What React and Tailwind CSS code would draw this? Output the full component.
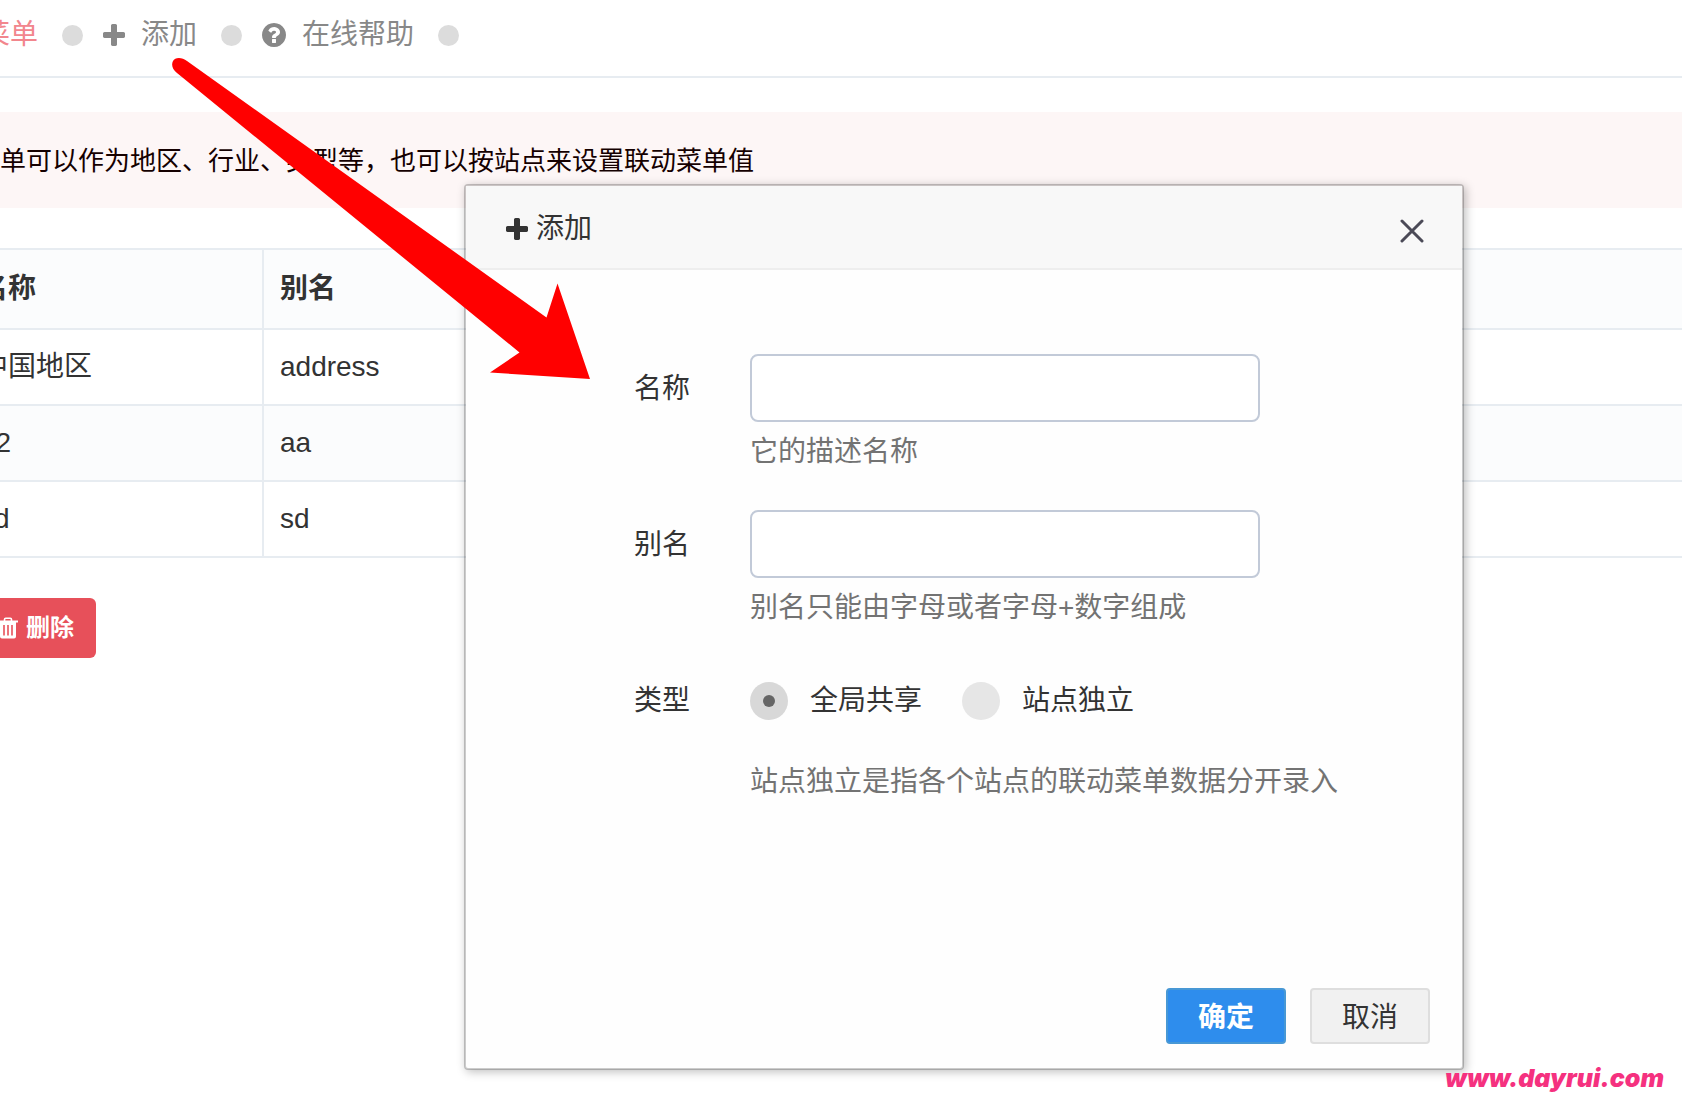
import React from 'react';

const rows = [
  { name: '中国地区', alias: 'address' },
  { name: '12', alias: 'aa' },
  { name: 'sd', alias: 'sd' },
];

function PlusIcon() {
  return (
    <svg viewBox="192 128 1408 1408" className="w-[22px] h-[22px] shrink-0" fill="currentColor" aria-hidden="true">
      <path d="M1600 736v192q0 40-28 68t-68 28h-416v416q0 40-28 68t-68 28h-192q-40 0-68-28t-28-68v-416h-416q-40 0-68-28t-28-68v-192q0-40 28-68t68-28h416v-416q0-40 28-68t68-28h192q40 0 68 28t28 68v416h416q40 0 68 28t28 68z" />
    </svg>
  );
}

function HelpIcon() {
  return (
    <svg viewBox="128 128 1536 1536" className="w-6 h-6 shrink-0" fill="currentColor" aria-hidden="true">
      <path d="M1024 1376v-192q0-14-9-23t-23-9h-192q-14 0-23 9t-9 23v192q0 14 9 23t23 9h192q14 0 23-9t9-23zm256-672q0-88-55.5-163t-138.5-116-170-41q-243 0-371 213-15 24 8 42l132 100q7 6 19 6 16 0 25-12 53-68 86-92 34-24 86-24 48 0 85.5 26t37.5 59q0 38-20 61t-68 45q-63 28-115.5 86.5t-52.5 125.5v36q0 14 9 23t23 9h192q14 0 23-9t9-23q0-19 21.5-49.5t54.5-49.5q32-18 49-28.5t46-35 44.5-48 28-60.5 12.5-81zm384 192q0 209-103 385.5t-279.5 279.5-385.5 103-385.5-103-279.5-279.5-103-385.5 103-385.5 279.5-279.5 385.5-103 385.5 103 279.5 279.5 103 385.5z" />
    </svg>
  );
}

function TrashIcon() {
  return (
    <svg viewBox="0 0 20 22" className="w-5 h-[22px] shrink-0" fill="currentColor" aria-hidden="true">
      <path d="M0 3.500h20v2H0z" />
      <path d="M6.500 4V2.500a1.200 1.200 0 0 1 1.200-1.200h4.600a1.200 1.200 0 0 1 1.200 1.200V4" fill="none" stroke="currentColor" strokeWidth="1.6" />
      <path fillRule="evenodd" d="M2 5h16v14.500a2 2 0 0 1-2 2H4a2 2 0 0 1-2-2zM5.200 8v10.500h1.600V8zM9.200 8v10.500h1.600V8zM13.200 8v10.500h1.600V8z" />
    </svg>
  );
}

function Dot() {
  return <span className="w-[21px] h-[21px] rounded-full bg-[#dcdcdc] shrink-0" />;
}

function NavBar() {
  return (
    <nav className="border-b-2 border-[#e7ecf1] overflow-hidden">
      <ul className="-ml-[18px] h-[76px] pb-1.5 flex items-center gap-5 text-[#888888] whitespace-nowrap">
        <li className="flex items-center gap-6">
          <a href="#menu" className="text-[#f2868d]">菜单</a>
          <Dot />
        </li>
        <li className="flex items-center gap-6">
          <a href="#add" className="flex items-center gap-4">
            <PlusIcon />
            添加
          </a>
          <Dot />
        </li>
        <li className="flex items-center gap-6">
          <a href="#help" className="flex items-center gap-4">
            <HelpIcon />
            在线帮助
          </a>
          <Dot />
        </li>
      </ul>
    </nav>
  );
}

function MenuTable() {
  const cell = 'border-2 border-[#e7ecf1] px-4 text-left';
  return (
    <table className="-ml-[38px] w-[calc(100%+76px)] border-collapse text-[#333333]">
      <thead>
        <tr className="h-20 bg-[#fbfcfd]">
          <th scope="col" className={cell + ' w-[300px]'}>名称</th>
          <th scope="col" className={cell}>别名</th>
        </tr>
      </thead>
      <tbody>
        {rows.map((row) => (
          <tr key={row.alias + row.name} className="h-19 even:bg-[#fbfcfd]">
            <td className={cell}>{row.name}</td>
            <td className={cell}>{row.alias}</td>
          </tr>
        ))}
      </tbody>
    </table>
  );
}

function Field({ id, label, help }) {
  return (
    <div className="flex gap-[60px]">
      <label htmlFor={id} className="w-[224px] h-[68px] pt-0.5 shrink-0 flex items-center justify-end">
        {label}
      </label>
      <div className="flex-1">
        <input
          id={id}
          type="text"
          className="block w-[510px] max-w-full h-[68px] px-6 bg-white border-2 border-[#c2cad8] rounded-lg focus:outline-none"
        />
        <p className="mt-2.5 text-[#737373]">{help}</p>
      </div>
    </div>
  );
}

function Radio({ label, ...props }) {
  return (
    <label className="flex items-center gap-[22px]">
      <input
        type="radio"
        name="share"
        className="appearance-none grid place-items-center w-[38px] h-[38px] rounded-full bg-[#e6e6e6] checked:bg-[#d8d8d8] checked:before:content-[''] checked:before:w-3 checked:before:h-3 checked:before:rounded-full checked:before:bg-[#666666]"
        {...props}
      />
      {label}
    </label>
  );
}

function AddDialog() {
  return (
    <div
      role="dialog"
      aria-labelledby="dialog-title"
      className="flex-1 flex flex-col bg-[#fefefe] bg-clip-padding border-2 border-black/20 rounded shadow-[2px_2px_10px_rgba(0,0,0,0.25)] text-[#333333]"
    >
      <header className="h-[84px] pl-10 pr-[38px] pt-1 flex items-center justify-between bg-[#f8f8f8] border-b-2 border-[#eeeeee]">
        <h2 id="dialog-title" className="flex items-center gap-2">
          <PlusIcon />
          添加
        </h2>
        <button type="button" aria-label="关闭" className="pt-1 text-[#4b4a57]">
          <svg viewBox="0 0 24 24" className="w-6 h-6" fill="none" stroke="currentColor" strokeWidth="3" strokeLinecap="round">
            <path d="M2 2l20 20M22 2L2 22" />
          </svg>
        </button>
      </header>

      <form className="flex-1 pt-[84px] flex flex-col gap-[38px]">
        <Field id="name" label="名称" help="它的描述名称" />
        <Field id="alias" label="别名" help="别名只能由字母或者字母+数字组成" />
        <fieldset className="flex gap-[60px]" aria-labelledby="type-label">
          <div id="type-label" className="w-[224px] h-[68px] pt-0.5 shrink-0 flex items-center justify-end">类型</div>
          <div className="flex-1">
            <div className="h-[68px] pt-0.5 flex items-center gap-10">
              <Radio label="全局共享" value="0" defaultChecked />
              <Radio label="站点独立" value="1" />
            </div>
            <p className="mt-7 text-[#737373]">站点独立是指各个站点的联动菜单数据分开录入</p>
          </div>
        </fieldset>
      </form>

      <footer className="flex justify-end gap-6 pr-8 pb-6">
        <button type="button" className="w-[120px] h-14 pt-1 rounded border-2 border-[#4898d5] bg-[#2e8ded] text-white font-bold">
          确定
        </button>
        <button type="button" className="w-[120px] h-14 pt-1 rounded border-2 border-[#dedede] bg-[#f1f1f1]">
          取消
        </button>
      </footer>
    </div>
  );
}

export default function App() {
  return (
    <div className="relative min-h-screen overflow-hidden bg-white font-['Liberation_Sans','Noto_Sans_CJK_SC',sans-serif] text-[28px] leading-10">
      <NavBar />

      <main>
        <p className="mt-[34px] h-24 pt-0.5 flex items-center bg-[#fdf6f6] text-[26px] text-[#150000] whitespace-nowrap">
          单可以作为地区、行业、类型等，也可以按站点来设置联动菜单值
        </p>
        <div className="mt-10 overflow-hidden">
          <MenuTable />
        </div>
        <button
          type="button"
          className="mt-10 -ml-6 h-[60px] px-[22px] flex items-center gap-2 rounded-md bg-[#e7505a] text-white text-2xl font-bold"
        >
          <TrashIcon />
          删除
        </button>
      </main>

      {/* add dialog floats over the list */}
      <div className="absolute inset-0 flex pl-[464px] pr-[218px] pt-[184px] pb-6">
        <AddDialog />
      </div>

      {/* arrow from the add link to the dialog */}
      <svg className="absolute left-0 top-0 w-[600px] h-[400px] pointer-events-none" viewBox="0 0 600 400" fill="#ff0000" aria-hidden="true">
        <path d="M177 73L519.5 352.5L490 372.5L590 379L557.5 283.5L546.5 317.5L187 61C182 57 175 57 173 61C171 65 172.500 69.500 177 73Z" />
      </svg>

      <a
        href="#home"
        className="absolute right-[18px] bottom-0.5 font-['Inter',sans-serif] font-black italic text-[25px] leading-7 text-[#f5317f]"
      >
        www.dayrui.com
      </a>
    </div>
  );
}
